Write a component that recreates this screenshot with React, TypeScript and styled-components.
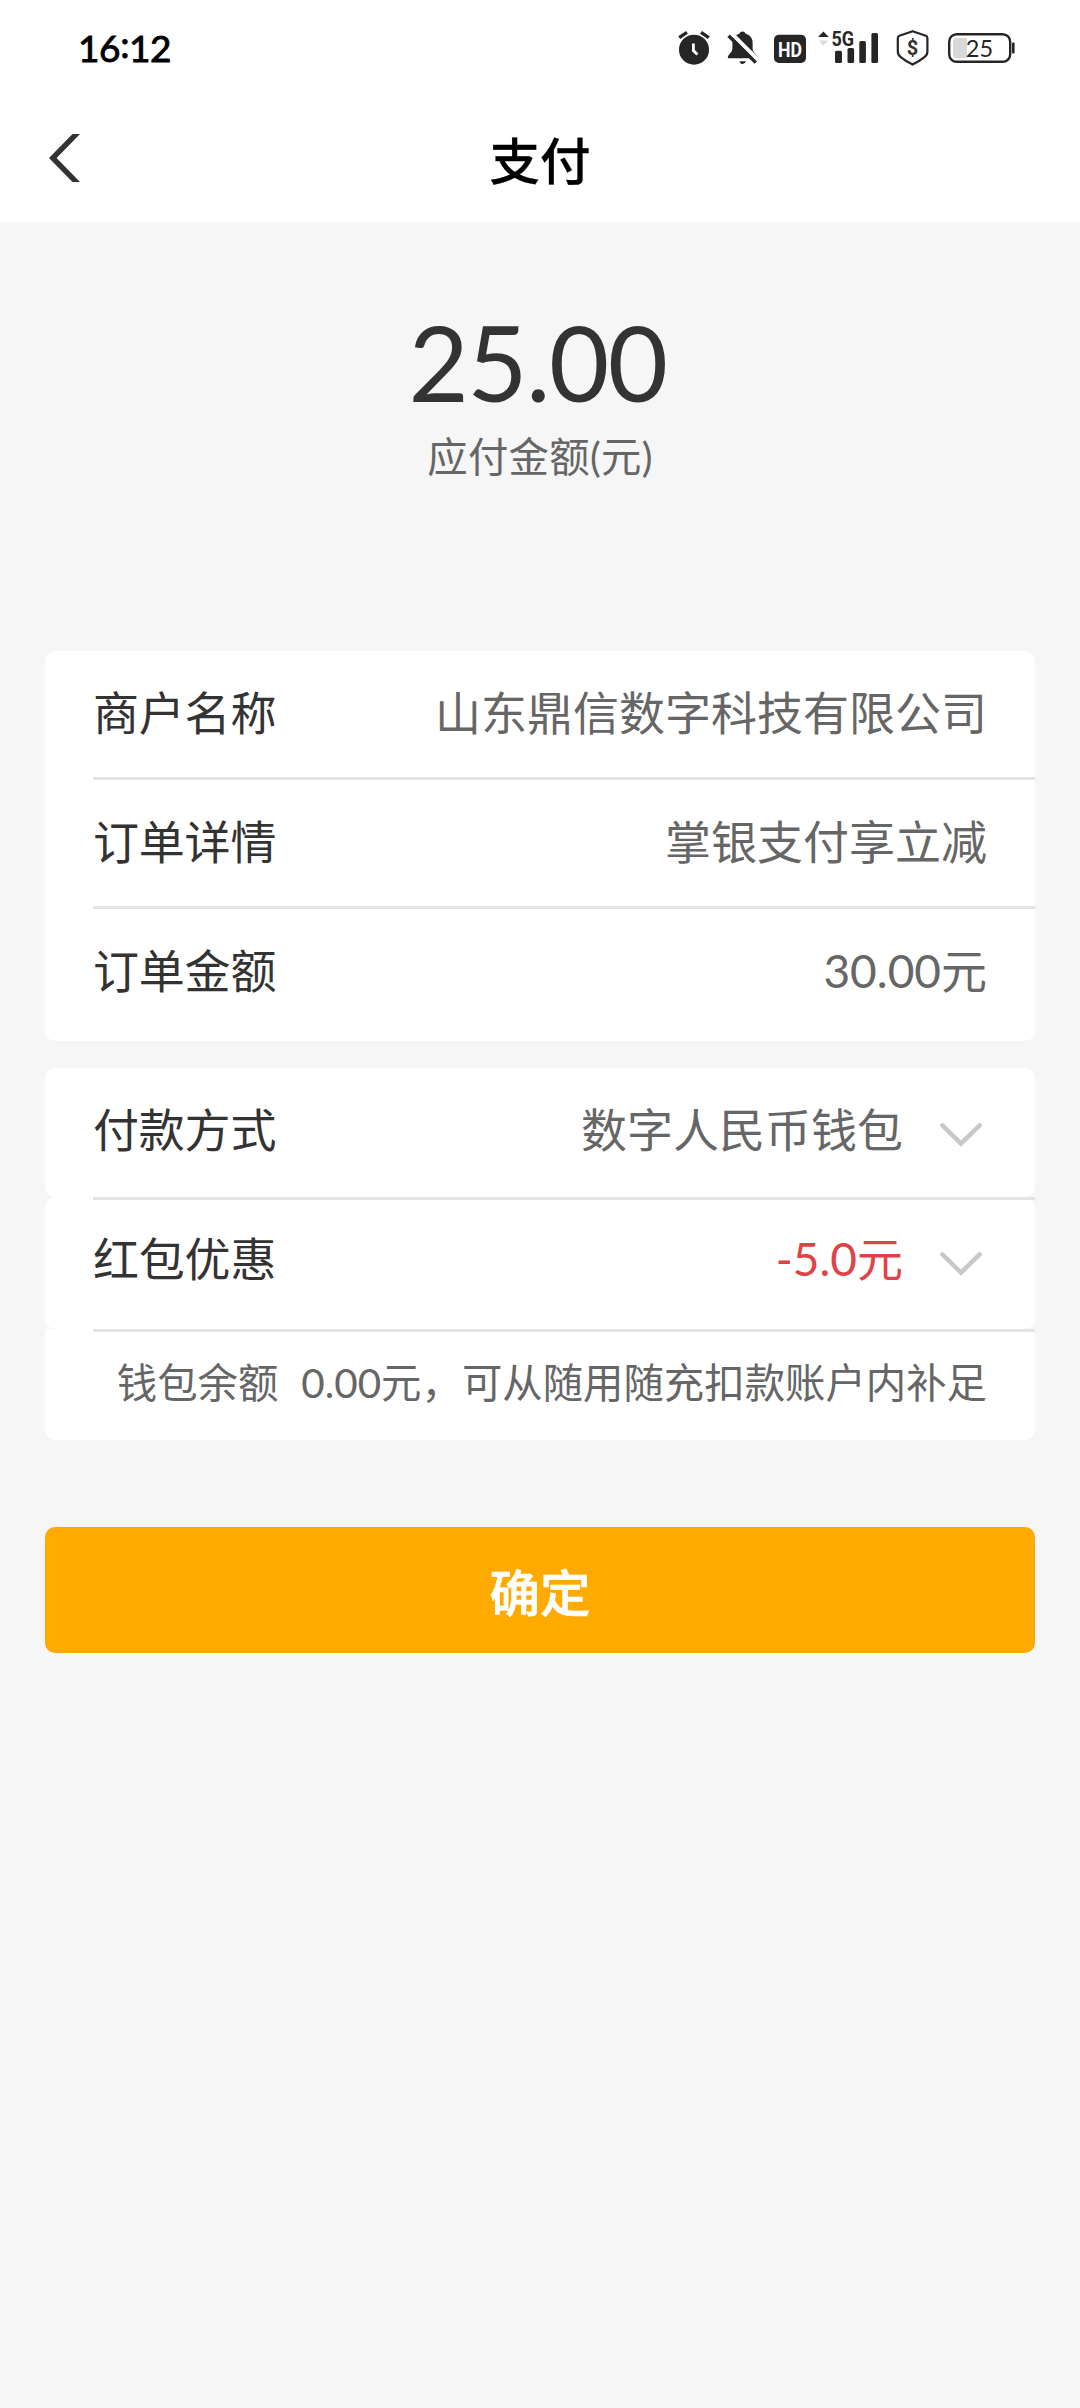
import React from 'react';
import styled, { createGlobalStyle } from 'styled-components';

const GlobalStyle = createGlobalStyle`
  * { box-sizing: border-box; }
  body {
    margin: 0;
    background: #f6f6f6;
    font-family: Lato, "Noto Sans CJK SC", sans-serif;
    color: #333;
  }
`;

const Screen = styled.div`
  width: 1080px;
  min-height: 2408px;
  display: flex;
  flex-direction: column;
  background: #f6f6f6;
`;

const StatusBar = styled.div`
  height: 96px;
  padding: 0 64px 0 78px;
  display: flex;
  align-items: center;
  justify-content: space-between;
  background: #fff;
`;

const Clock = styled.time`
  margin-bottom: 3px;
  font-size: 37px;
  line-height: 40px;
  font-weight: 400;
  letter-spacing: -0.4px;
  color: #000;
  -webkit-text-stroke: 0.9px #000;
`;

const Colon = styled.span`
  line-height: 1;
  vertical-align: 4px;
`;

const StatusIcons = styled.div`
  display: flex;
  height: 40px;
`;

const Glyph = styled.svg`
  display: block;
  flex: none;
`;

const StatusGlyph = styled(Glyph)<{ $gap?: number }>`
  margin-left: ${(p) => p.$gap ?? 0}px;
`;

const ChevronGlyph = styled(Glyph)`
  margin: 11px 5px 0 37px;
`;

const Header = styled.header`
  height: 126px;
  padding: 3px 49px 0;
  display: grid;
  grid-template-columns: 1fr auto 1fr;
  align-items: center;
  background: #fff;
`;

const BackButton = styled.button`
  width: 31px;
  height: 48px;
  margin-bottom: 5px;
  padding: 0;
  border: 0;
  background: none;
`;

const Title = styled.h1`
  margin: 0;
  font-size: 50.5px;
  line-height: 72px;
  font-weight: 500;
  color: #000;
  -webkit-text-stroke: 0.3px #000;
`;

const Summary = styled.section`
  height: 429px;
  padding-top: 78px;
  display: flex;
  flex-direction: column;
  align-items: center;
`;

const Amount = styled.div`
  padding-right: 5px;
  font-size: 104px;
  line-height: 124px;
  letter-spacing: -1.6px;
`;

const AmountCaption = styled.div`
  margin-top: 5px;
  font-size: 40.4px;
  line-height: 56px;
  letter-spacing: 0.3px;
  color: #666;
`;

const Card = styled.section<{ $mb: number }>`
  margin: 0 45px ${(p) => p.$mb}px;
  display: flex;
  flex-direction: column;
`;

const Row = styled.div<{ $h: number; $pb?: number; $corners: string }>`
  height: ${(p) => p.$h}px;
  padding: 0 48px ${(p) => p.$pb ?? 0}px;
  display: flex;
  align-items: center;
  background: #fff;
  border-radius: ${(p) => p.$corners};
`;

const Divider = styled.hr<{ $above?: boolean }>`
  width: 942px;
  height: 3px;
  margin: ${(p) => (p.$above ? '-3px 0 0 48px' : '0 0 -3px 48px')};
  border: 0;
  background: #e3e3e3;
  z-index: 1;
`;

const Label = styled.span`
  font-size: 46px;
  line-height: 64px;
  letter-spacing: -0.2px;
  color: #333;
`;

const Value = styled.span<{ $color?: string }>`
  margin-left: auto;
  font-size: 46px;
  line-height: 64px;
  color: ${(p) => p.$color ?? '#666'};
`;

const Note = styled.p`
  margin: 0 0 0 auto;
  font-size: 40.4px;
  line-height: 56px;
  color: #666;
  white-space: nowrap;
`;

const NoteLabel = styled.span`
  margin-right: 23px;
`;

const Confirm = styled.button`
  height: 126px;
  margin: 0 45px;
  padding: 6px 0 0;
  border: 0;
  border-radius: 10px;
  background: #ffaa00;
  color: #fff;
  font: 500 50.5px/72px Lato, "Noto Sans CJK SC", sans-serif;
  -webkit-text-stroke: 0.7px #fff;
`;

const INK = '#262626';

const Chevron = () => (
  <ChevronGlyph width="42" height="24" viewBox="0 0 42 24">
    <path d="M2.4 2.4 L21 20.6 L39.6 2.4" fill="none" stroke="#c8c8c8" strokeWidth="4.5" strokeLinecap="round" />
  </ChevronGlyph>
);

const AlarmIcon = () => (
  <StatusGlyph width="32" height="40" viewBox="0 0 32 40">
    <circle cx="16" cy="21.7" r="15" fill={INK} />
    <path d="M1.2 9.6 L9 4.4 M30.8 9.6 L23 4.4" stroke={INK} strokeWidth="3.4" />
    <path d="M15.4 15.5 V22.6 L19.4 26.4" fill="none" stroke="#fff" strokeWidth="2.8" />
  </StatusGlyph>
);

const MutedBellIcon = () => (
  <StatusGlyph $gap={17} width="31" height="40" viewBox="0 0 31 40">
    <path
      d="M12.6 5.6 Q13 3.4 15.5 3.4 Q18 3.4 18.4 5.6 Q25.6 7.8 25.6 15 V21 Q25.6 23.6 28 25.6 Q30.2 27.6 30.2 30.2 H.8 Q.8 27.6 3 25.6 Q5.4 23.6 5.4 21 V15 Q5.4 7.8 12.6 5.6Z"
      fill={INK}
    />
    <path d="M12.6 33.2 H18.8 Q18.2 36 15.7 36 Q13.2 36 12.6 33.2Z" fill={INK} />
    <path d="M4 4.9 L32 32.9" stroke="#fff" strokeWidth="4" />
    <path d="M1.6 7.7 L28.8 34.6" stroke={INK} strokeWidth="3.4" />
  </StatusGlyph>
);

const HdIcon = () => (
  <StatusGlyph $gap={16} width="32" height="40" viewBox="0 0 32 40">
    <rect x="0" y="6.8" width="32" height="28.2" rx="5" fill={INK} />
    <text x="16" y="28.6" textAnchor="middle" textLength="24" lengthAdjust="spacingAndGlyphs" fontFamily="Roboto, sans-serif" fontWeight="700" fontSize="21" fill="#fff">HD</text>
  </StatusGlyph>
);

const SignalIcon = () => (
  <StatusGlyph $gap={12} width="61" height="40" viewBox="0 0 61 40">
    <path d="M0 9 L5.4 3.6 L10.8 9Z" fill={INK} />
    <path d="M.6 12.6 H10.4 L5.4 17.4Z" fill="#ddd" />
    <text x="13.4" y="18" textLength="22.6" lengthAdjust="spacingAndGlyphs" fontFamily="Roboto, sans-serif" fontWeight="700" fontSize="20" fill={INK}>5G</text>
    <rect x="17" y="22.8" width="7" height="12.2" rx="1.6" fill={INK} />
    <rect x="29.5" y="20" width="6.6" height="15" rx="1.6" fill={INK} />
    <rect x="41.3" y="13" width="6.6" height="22" rx="1.6" fill={INK} />
    <rect x="53.4" y="5" width="6.6" height="30" rx="1.6" fill={INK} />
  </StatusGlyph>
);

const ShieldIcon = () => (
  <StatusGlyph $gap={17} width="34" height="40" viewBox="0 0 34 40">
    <path
      d="M16.6 3.2 L29.8 7.8 Q31.4 8.4 31.4 10 V23.4 Q31.4 27 28.4 29.2 Q23 33.6 16.6 36.6 Q10.2 33.6 4.8 29.2 Q1.8 27 1.8 23.4 V10 Q1.8 8.4 3.4 7.8Z"
      fill="none"
      stroke={INK}
      strokeWidth="2.2"
      strokeLinejoin="round"
    />
    <text x="16.6" y="26.8" textAnchor="middle" fontFamily="Roboto, sans-serif" fontWeight="700" fontSize="20" fill="#333">$</text>
  </StatusGlyph>
);

const BatteryIcon = () => (
  <StatusGlyph $gap={18} width="68" height="40" viewBox="0 0 68 40">
    <rect x="1.2" y="6.2" width="61" height="27.6" rx="7.5" fill="none" stroke={INK} strokeWidth="2.4" />
    <path d="M19 10 H8.5 Q5 10 5 13.5 V26.5 Q5 30 8.5 30 H19Z" fill="#d8d8d8" />
    <rect x="64" y="14.6" width="2.6" height="11" rx="1" fill={INK} />
    <text x="31.4" y="28.8" textAnchor="middle" fontFamily="Lato, sans-serif" fontSize="23.5" fill={INK}>25</text>
  </StatusGlyph>
);

const orderRows = [
  { label: '商户名称', value: '山东鼎信数字科技有限公司', h: 129, pb: 6, corners: '10px 10px 0 0' },
  { label: '订单详情', value: '掌银支付享立减', h: 129, pb: 6, corners: '0' },
  { label: '订单金额', value: '30.00元', h: 132, pb: 9, corners: '0 0 10px 10px' },
];

const paymentRows = [
  { label: '付款方式', value: '数字人民币钱包', h: 129, pb: 6, color: '#666' },
  { label: '红包优惠', value: '-5.0元', h: 132, pb: 9, color: '#de4447' },
];

export default function App() {
  return (
    <Screen>
      <GlobalStyle />
      <StatusBar>
        <Clock>
          16<Colon>:</Colon>12
        </Clock>
        <StatusIcons>
          <AlarmIcon />
          <MutedBellIcon />
          <HdIcon />
          <SignalIcon />
          <ShieldIcon />
          <BatteryIcon />
        </StatusIcons>
      </StatusBar>
      <Header>
        <BackButton aria-label="返回">
          <Glyph width="31" height="48" viewBox="0 0 31 48">
            <path d="M0 24 L23.5 0 H31 L7.6 24 L31 48 H23.5Z" fill="#333" />
          </Glyph>
        </BackButton>
        <Title>支付</Title>
      </Header>
      <Summary>
        <Amount>25.00</Amount>
        <AmountCaption>应付金额(元)</AmountCaption>
      </Summary>
      <Card $mb={27}>
        {orderRows.map((r, i) => (
          <React.Fragment key={r.label}>
            <Row $h={r.h} $pb={r.pb} $corners={r.corners}>
              <Label>{r.label}</Label>
              <Value>{r.value}</Value>
            </Row>
            {i < orderRows.length - 1 && <Divider $above />}
          </React.Fragment>
        ))}
      </Card>
      <Card $mb={87}>
        {paymentRows.map((r) => (
          <React.Fragment key={r.label}>
            <Row $h={r.h} $pb={r.pb} $corners="10px">
              <Label>{r.label}</Label>
              <Value $color={r.color}>{r.value}</Value>
              <Chevron />
            </Row>
            <Divider />
          </React.Fragment>
        ))}
        <Row $h={111} $pb={3} $corners="0 0 10px 10px">
          <Note>
            <NoteLabel>钱包余额</NoteLabel>0.00元，可从随用随充扣款账户内补足
          </Note>
        </Row>
      </Card>
      <Confirm>确定</Confirm>
    </Screen>
  );
}
